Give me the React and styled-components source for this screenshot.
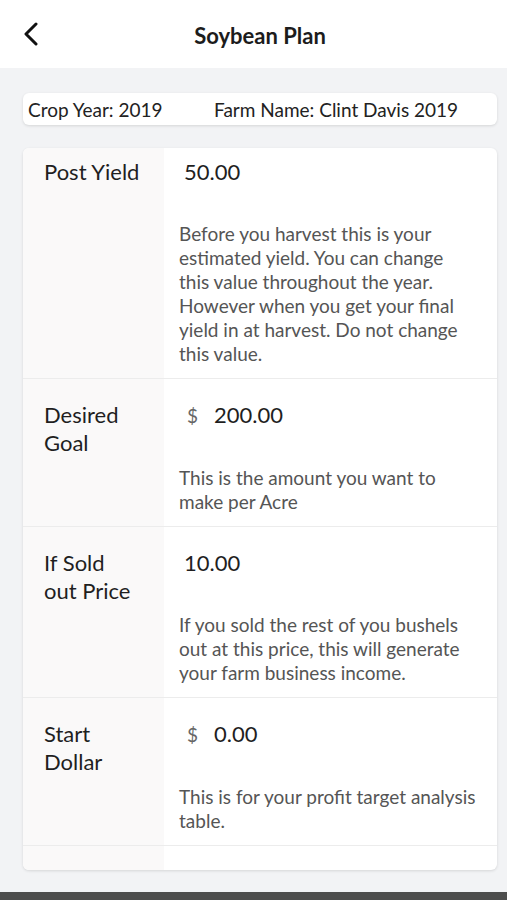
import React from 'react';
import styled, { createGlobalStyle } from 'styled-components';

const GlobalStyle = createGlobalStyle`
  body {
    margin: 0;
    font-family: Lato, "Open Sans", sans-serif;
    background: #f2f3f5;
  }
`;

const Page = styled.div`
  height: 900px;
  display: flex;
  flex-direction: column;
  background-color: #f2f3f5;
  overflow: hidden;
`;

const Header = styled.header`
  height: 68px;
  flex-shrink: 0;
  background-color: #fff;
  display: grid;
  grid-template-columns: 66px 1fr 53px;
  align-items: center;
`;

const BackButton = styled.button`
  border: none;
  background: none;
  padding: 0 0 0 23px;
  height: 40px;
  display: flex;
  align-items: center;
  cursor: pointer;
`;

const Title = styled.h1`
  margin: 0;
  text-align: center;
  font-size: 22px;
  font-weight: 700;
  color: #1c1c1c;
  padding-top: 2px;
`;

const Content = styled.main`
  flex: 1;
  padding: 25px 10px 0 23px;
  display: flex;
  flex-direction: column;
  gap: 23px;
`;

const InfoBar = styled.div`
  height: 32px;
  background-color: #fff;
  border-radius: 6px;
  box-shadow: 0 1px 3px rgba(0, 0, 0, 0.12);
  display: flex;
  align-items: center;
  padding-left: 5px;
  font-size: 19px;
  color: #222;
`;

const InfoItem = styled.span`
  width: ${(p) => p.$width || 'auto'};
`;

const Card = styled.section`
  background-color: #fff;
  border-radius: 6px;
  box-shadow: 0 1px 3px rgba(0, 0, 0, 0.12);
  overflow: hidden;
`;

const Row = styled.div`
  display: grid;
  grid-template-columns: 141px 1fr;
  border-bottom: 1px solid #ececec;
`;

const LabelCell = styled.div`
  background-color: #faf9f9;
  padding: ${(p) => (p.$first ? 10 : 22)}px 0 0 21px;
  font-size: 22px;
  line-height: 28px;
  color: #1f1f1f;
  white-space: nowrap;
`;

const ValueCell = styled.div`
  padding: ${(p) => (p.$first ? 10 : 22)}px 15px 12px 15px;
`;

const ValueLine = styled.div`
  display: flex;
  align-items: baseline;
  padding-left: 5px;
  font-size: 22px;
  line-height: 28px;
  color: #1f1f1f;
`;

const Dollar = styled.span`
  font-size: 19px;
  color: #666;
  margin: 0 16px 0 3px;
`;

const Description = styled.p`
  margin: 36px 0 0;
  font-size: 19px;
  line-height: 24px;
  color: #555;
  white-space: pre-line;
`;

const Spacer = styled.div`
  display: grid;
  grid-template-columns: 141px 1fr;
  height: 24px;
`;

const SpacerLeft = styled.div`
  background-color: #faf9f9;
`;

const Footer = styled.div`
  height: 8px;
  flex-shrink: 0;
  background-color: #4d4d4d;
`;

const rows = [
  {
    label: ['Post Yield'],
    value: '50.00',
    text: 'Before you harvest this is your estimated yield. You can change\nthis value throughout the year. However when you get your final yield in at harvest. Do not change this value.',
  },
  {
    label: ['Desired', 'Goal'],
    value: '200.00',
    dollar: true,
    text: 'This is the amount you want to make per Acre',
  },
  {
    label: ['If Sold', 'out Price'],
    value: '10.00',
    text: 'If you sold the rest of you bushels out at this price, this will generate your farm business income.',
  },
  {
    label: ['Start', 'Dollar'],
    value: '0.00',
    dollar: true,
    text: 'This is for your profit target analysis table.',
  },
];

const App = () => {
  return (
    <Page>
      <GlobalStyle />
      <Header>
        <BackButton aria-label="Back">
          <svg width="16" height="24" viewBox="0 0 16 24">
            <path d="M13 2 L3 12 L13 22" fill="none" stroke="#111" strokeWidth="3" strokeLinecap="round" strokeLinejoin="round" />
          </svg>
        </BackButton>
        <Title>Soybean Plan</Title>
        <div />
      </Header>
      <Content>
        <InfoBar>
          <InfoItem $width="186px">Crop Year: 2019</InfoItem>
          <InfoItem>Farm Name: Clint Davis 2019</InfoItem>
        </InfoBar>
        <Card>
          {rows.map((row, i) => (
            <Row key={i}>
              <LabelCell $first={i === 0}>
                {row.label.map((l) => (
                  <div key={l}>{l}</div>
                ))}
              </LabelCell>
              <ValueCell $first={i === 0}>
                <ValueLine>
                  {row.dollar && <Dollar>$</Dollar>}
                  {row.value}
                </ValueLine>
                <Description>{row.text}</Description>
              </ValueCell>
            </Row>
          ))}
          <Spacer>
            <SpacerLeft />
            <div />
          </Spacer>
        </Card>
      </Content>
      <Footer />
    </Page>
  );
};

export default App;
